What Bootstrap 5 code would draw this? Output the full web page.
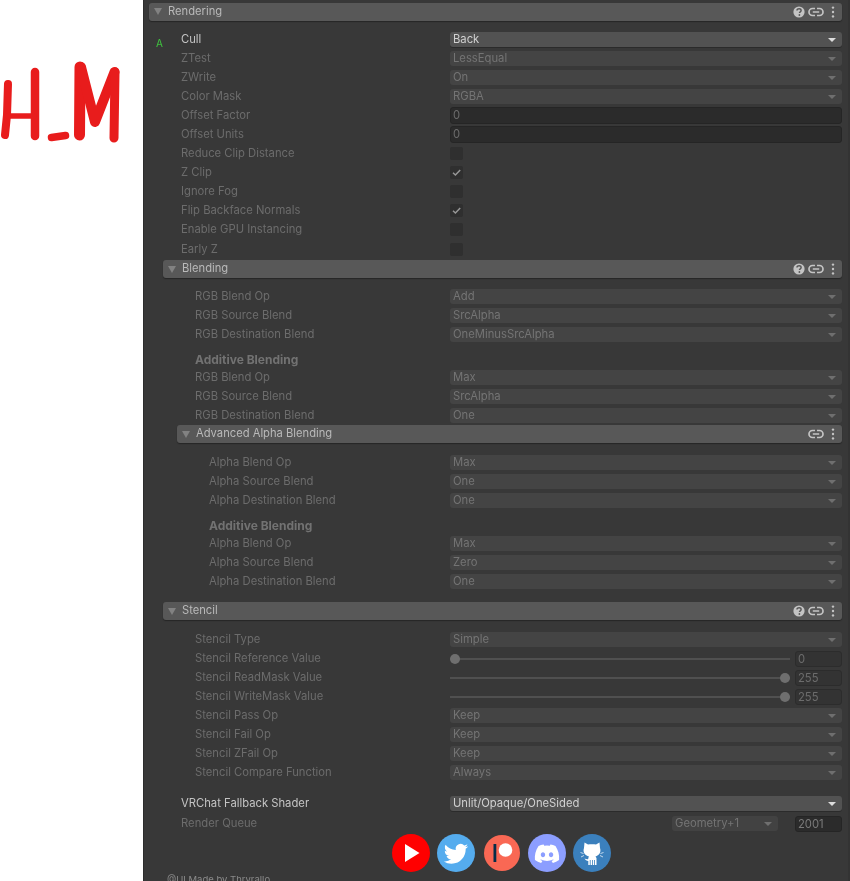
<!DOCTYPE html>
<html lang="en">
<head>
<meta charset="utf-8">
<title>Rendering</title>
<link href="https://cdn.jsdelivr.net/npm/bootstrap@5.3.0/dist/css/bootstrap.min.css" rel="stylesheet">
<style>
html,body{height:881px;overflow:hidden;background:#fff}
body{font-family:Inter,"Liberation Sans",sans-serif;font-size:11.25px;line-height:1;filter:blur(.4px)}
.stage{height:881px}
.logo-col{width:143px;flex:none}
.logo-svg{display:block;margin-top:50px}
.panel{flex:1;background:#383838;padding:2.5px 8px 0 5px;border-left:1px solid #2c2c2c;overflow:hidden;position:relative}
.sbar{position:absolute;top:0;right:0;bottom:0;width:2px;background:#333}
.fold{height:18px;background:#585858;border-radius:3px;box-shadow:0 1px 1px #262626;color:#b9b9b9;padding-left:5px;font-size:11.2px}
.fold .tri{width:0;height:0;border-left:4px solid transparent;border-right:4px solid transparent;border-top:7px solid #828282;margin-right:6px}
.fold .fname{flex:1}
.fold svg{display:block;flex:none}
.ic-set{gap:3px;padding-right:7px}
.body1{padding:9.5px 0 1px 0}
.nest{padding-left:14px}
.body2{padding-top:9px}
.body3{padding-top:10px}
.prow{height:19px;padding-left:32px;color:#6c6c6c}
.on{color:#c4c4c4}
.plabel{flex:1;white-space:nowrap}
.pctl{width:392px;flex:none}
.dd{height:15px;border-radius:3px;background:#444;color:#747474;padding:0 6px 0 3px}
.dd .val{flex:1}
.dd .car{width:0;height:0;border-left:4px solid transparent;border-right:4px solid transparent;border-top:4px solid #6f6f6f}
.dd.live{background:#525252;color:#d0d0d0;box-shadow:0 1px 0 #2b2b2b}
.dd.live .car{border-top-color:#dcdcdc}
.nbox{height:17px;background:#2b2b2b;border:1px solid #252525;border-radius:3px;color:#6c6c6c;padding-left:2px;line-height:15px}
.cbx{width:13px;height:13px;background:#2f2f2f;border-radius:2px;margin-left:0}
.cbx svg{display:block}
.mt-early{margin-top:1px}
.subhead{height:17px;margin-top:7px;font-weight:700;color:#727272;font-size:12px}
.gap11{margin-top:11px}
.gap12{margin-top:12px}
.track{flex:1;height:2px;background:#505050;position:relative}
.thumb{position:absolute;top:-4px;width:10px;height:10px;border-radius:50%;background:#6f6f6f}
.thumb.lo{left:0}
.thumb.hi{right:0}
.sl-num{width:47px;flex:none;height:16px;margin-left:5px;background:#333;border:1px solid #2c2c2c;border-radius:3px;color:#6c6c6c;padding-left:2px;line-height:14px}
.geo{width:106px;background:#424242;color:#747474;margin-right:17px}
.socials{margin-top:1px;margin-left:12px;align-items:center}
.soc{width:38px;height:38px;border-radius:50%;flex:none;margin-right:7.3px}
.soc.slim{width:36px;height:36px;margin-left:1px;margin-right:8.3px}
.soc:last-child{margin-right:0}
.soc svg{display:block}
.by{position:absolute;left:23px;top:875px;color:#8a8a8a;font-size:9.5px;white-space:nowrap}
.q-slot{width:47px;height:16px;flex:none;color:#7a7a7a;line-height:14px}
</style>
</head>
<body>
<svg width="0" height="0" class="position-absolute">
<symbol id="i-help" viewBox="0 0 12 12"><circle cx="6" cy="6" r="5.6" fill="#c4c4c4"/><path d="M4 4.6C4 3.3 5 2.7 6.1 2.7c1.2 0 2 .7 2 1.700 0 1.500-1.600 1.400-1.600 2.700" fill="none" stroke="#585858" stroke-width="1.500"/><circle cx="6.400" cy="9" r=".9" fill="#585858"/></symbol>
<symbol id="i-link" viewBox="0 0 16 12"><path d="M7 2.500H4.500a3.500 3.500 0 0 0 0 7H7M9 2.500h2.500a3.500 3.500 0 0 1 0 7H9M4.800 6h6.400" fill="none" stroke="#c4c4c4" stroke-width="1.700"/></symbol>
<symbol id="i-dots" viewBox="0 0 4 12"><circle cx="2" cy="1.600" r="1.200" fill="#c4c4c4"/><circle cx="2" cy="6" r="1.200" fill="#c4c4c4"/><circle cx="2" cy="10.400" r="1.200" fill="#c4c4c4"/></symbol>
<symbol id="i-chk" viewBox="0 0 13 13"><path d="M3 6.800l2.400 2.200 4.800-5" fill="none" stroke="#989898" stroke-width="1.500"/></symbol>
</svg>
<div class="stage d-flex">
  <div class="logo-col">
    <svg class="logo-svg" width="143" height="100" viewBox="0 50 143 100" fill="none" stroke="#e81c1c" stroke-linecap="round" stroke-linejoin="round">
      <path d="M8 84 7 115 5 135" stroke-width="8"/>
      <path d="M35 72V136" stroke-width="8.500"/>
      <path d="M8 116H34" stroke-width="5.500"/>
      <path d="M51.500 137.500 65.500 135.500" stroke-width="7.500"/>
      <path d="M79.500 135 80 67" stroke-width="11"/>
      <path d="M81 67 95 122 114.500 72" stroke-width="10"/>
      <path d="M115 72 114 138" stroke-width="9"/>
    </svg>
  </div>
  <div class="panel">
    <div class="sbar"></div>
    <div class="fold d-flex align-items-center"><span class="tri"></span><span class="fname">Rendering</span><span class="ic-set d-flex align-items-center"><svg width="12" height="12"><use href="#i-help"/></svg><svg width="16" height="12"><use href="#i-link"/></svg><svg width="4" height="12" class="ms-1"><use href="#i-dots"/></svg></span></div>
    <div class="body1">
      <div class="prow on d-flex align-items-center position-relative"><span class="position-absolute" style="left:7px;top:8px;color:#3fc43f;font-size:10px">A</span><span class="plabel">Cull</span><div class="pctl dd live d-flex align-items-center"><span class="val">Back</span><span class="car"></span></div></div>
      <div class="prow d-flex align-items-center"><span class="plabel">ZTest</span><div class="pctl dd d-flex align-items-center"><span class="val">LessEqual</span><span class="car"></span></div></div>
      <div class="prow d-flex align-items-center"><span class="plabel">ZWrite</span><div class="pctl dd d-flex align-items-center"><span class="val">On</span><span class="car"></span></div></div>
      <div class="prow d-flex align-items-center"><span class="plabel">Color Mask</span><div class="pctl dd d-flex align-items-center"><span class="val">RGBA</span><span class="car"></span></div></div>
      <div class="prow d-flex align-items-center"><span class="plabel">Offset Factor</span><div class="pctl nbox">0</div></div>
      <div class="prow d-flex align-items-center"><span class="plabel">Offset Units</span><div class="pctl nbox">0</div></div>
      <div class="prow d-flex align-items-center"><span class="plabel">Reduce Clip Distance</span><div class="pctl"><div class="cbx"></div></div></div>
      <div class="prow d-flex align-items-center"><span class="plabel">Z Clip</span><div class="pctl"><div class="cbx"><svg width="13" height="13"><use href="#i-chk"/></svg></div></div></div>
      <div class="prow d-flex align-items-center"><span class="plabel">Ignore Fog</span><div class="pctl"><div class="cbx"></div></div></div>
      <div class="prow d-flex align-items-center"><span class="plabel">Flip Backface Normals</span><div class="pctl"><div class="cbx"><svg width="13" height="13"><use href="#i-chk"/></svg></div></div></div>
      <div class="prow d-flex align-items-center"><span class="plabel">Enable GPU Instancing</span><div class="pctl"><div class="cbx"></div></div></div>
      <div class="prow mt-early d-flex align-items-center"><span class="plabel">Early Z</span><div class="pctl"><div class="cbx"></div></div></div>
    </div>
    <div class="nest">
      <div class="fold d-flex align-items-center"><span class="tri"></span><span class="fname">Blending</span><span class="ic-set d-flex align-items-center"><svg width="12" height="12"><use href="#i-help"/></svg><svg width="16" height="12"><use href="#i-link"/></svg><svg width="4" height="12" class="ms-1"><use href="#i-dots"/></svg></span></div>
      <div class="body2">
        <div class="prow d-flex align-items-center"><span class="plabel">RGB Blend Op</span><div class="pctl dd d-flex align-items-center"><span class="val">Add</span><span class="car"></span></div></div>
        <div class="prow d-flex align-items-center"><span class="plabel">RGB Source Blend</span><div class="pctl dd d-flex align-items-center"><span class="val">SrcAlpha</span><span class="car"></span></div></div>
        <div class="prow d-flex align-items-center"><span class="plabel">RGB Destination Blend</span><div class="pctl dd d-flex align-items-center"><span class="val">OneMinusSrcAlpha</span><span class="car"></span></div></div>
        <div class="prow subhead d-flex align-items-center"><span class="plabel">Additive Blending</span></div>
        <div class="prow d-flex align-items-center"><span class="plabel">RGB Blend Op</span><div class="pctl dd d-flex align-items-center"><span class="val">Max</span><span class="car"></span></div></div>
        <div class="prow d-flex align-items-center"><span class="plabel">RGB Source Blend</span><div class="pctl dd d-flex align-items-center"><span class="val">SrcAlpha</span><span class="car"></span></div></div>
        <div class="prow d-flex align-items-center"><span class="plabel">RGB Destination Blend</span><div class="pctl dd d-flex align-items-center"><span class="val">One</span><span class="car"></span></div></div>
      </div>
      <div class="nest">
        <div class="fold d-flex align-items-center"><span class="tri"></span><span class="fname">Advanced Alpha Blending</span><span class="ic-set d-flex align-items-center"><svg width="16" height="12"><use href="#i-link"/></svg><svg width="4" height="12" class="ms-1"><use href="#i-dots"/></svg></span></div>
        <div class="body3">
          <div class="prow d-flex align-items-center"><span class="plabel">Alpha Blend Op</span><div class="pctl dd d-flex align-items-center"><span class="val">Max</span><span class="car"></span></div></div>
          <div class="prow d-flex align-items-center"><span class="plabel">Alpha Source Blend</span><div class="pctl dd d-flex align-items-center"><span class="val">One</span><span class="car"></span></div></div>
          <div class="prow d-flex align-items-center"><span class="plabel">Alpha Destination Blend</span><div class="pctl dd d-flex align-items-center"><span class="val">One</span><span class="car"></span></div></div>
          <div class="prow subhead d-flex align-items-center"><span class="plabel">Additive Blending</span></div>
          <div class="prow d-flex align-items-center"><span class="plabel">Alpha Blend Op</span><div class="pctl dd d-flex align-items-center"><span class="val">Max</span><span class="car"></span></div></div>
          <div class="prow d-flex align-items-center"><span class="plabel">Alpha Source Blend</span><div class="pctl dd d-flex align-items-center"><span class="val">Zero</span><span class="car"></span></div></div>
          <div class="prow d-flex align-items-center"><span class="plabel">Alpha Destination Blend</span><div class="pctl dd d-flex align-items-center"><span class="val">One</span><span class="car"></span></div></div>
        </div>
      </div>
    </div>
    <div class="nest gap11">
      <div class="fold d-flex align-items-center"><span class="tri"></span><span class="fname">Stencil</span><span class="ic-set d-flex align-items-center"><svg width="12" height="12"><use href="#i-help"/></svg><svg width="16" height="12"><use href="#i-link"/></svg><svg width="4" height="12" class="ms-1"><use href="#i-dots"/></svg></span></div>
      <div class="body3">
        <div class="prow d-flex align-items-center"><span class="plabel">Stencil Type</span><div class="pctl dd d-flex align-items-center"><span class="val">Simple</span><span class="car"></span></div></div>
        <div class="prow d-flex align-items-center"><span class="plabel">Stencil Reference Value</span><div class="pctl d-flex align-items-center"><div class="track"><span class="thumb lo"></span></div><div class="sl-num">0</div></div></div>
        <div class="prow d-flex align-items-center"><span class="plabel">Stencil ReadMask Value</span><div class="pctl d-flex align-items-center"><div class="track"><span class="thumb hi"></span></div><div class="sl-num">255</div></div></div>
        <div class="prow d-flex align-items-center"><span class="plabel">Stencil WriteMask Value</span><div class="pctl d-flex align-items-center"><div class="track"><span class="thumb hi"></span></div><div class="sl-num">255</div></div></div>
        <div class="prow d-flex align-items-center"><span class="plabel">Stencil Pass Op</span><div class="pctl dd d-flex align-items-center"><span class="val">Keep</span><span class="car"></span></div></div>
        <div class="prow d-flex align-items-center"><span class="plabel">Stencil Fail Op</span><div class="pctl dd d-flex align-items-center"><span class="val">Keep</span><span class="car"></span></div></div>
        <div class="prow d-flex align-items-center"><span class="plabel">Stencil ZFail Op</span><div class="pctl dd d-flex align-items-center"><span class="val">Keep</span><span class="car"></span></div></div>
        <div class="prow d-flex align-items-center"><span class="plabel">Stencil Compare Function</span><div class="pctl dd d-flex align-items-center"><span class="val">Always</span><span class="car"></span></div></div>
      </div>
    </div>
    <div class="prow on gap12 d-flex align-items-center"><span class="plabel">VRChat Fallback Shader</span><div class="pctl dd live d-flex align-items-center"><span class="val">Unlit/Opaque/OneSided</span><span class="car"></span></div></div>
    <div class="prow mt-early d-flex align-items-center"><span class="plabel">Render Queue</span><div class="dd geo d-flex align-items-center"><span class="val">Geometry+1</span><span class="car"></span></div><div class="q-slot nbox">2001</div></div>
    <div class="socials d-flex justify-content-center">
      <div class="soc" style="background:#f00"><svg width="38" height="38" viewBox="0 0 38 38"><path d="M13 10 27.500 19 13 28Z" fill="#fff"/></svg></div>
      <div class="soc" style="background:#55acee"><svg width="38" height="38" viewBox="-4.500 -4.500 25 25"><path fill="#fff" d="M5.026 15c6.038 0 9.341-5.003 9.341-9.334 0-.14 0-.282-.006-.422A6.685 6.685 0 0 0 16 3.542a6.658 6.658 0 0 1-1.889.518 3.301 3.301 0 0 0 1.447-1.817 6.533 6.533 0 0 1-2.087.793A3.286 3.286 0 0 0 7.875 6.030a9.325 9.325 0 0 1-6.767-3.429 3.289 3.289 0 0 0 1.018 4.382A3.323 3.323 0 0 1 .64 6.575v.045a3.288 3.288 0 0 0 2.632 3.218 3.203 3.203 0 0 1-.865.115 3.230 3.230 0 0 1-.614-.057 3.283 3.283 0 0 0 3.067 2.277A6.588 6.588 0 0 1 .78 13.580a6.320 6.320 0 0 1-.78-.045A9.344 9.344 0 0 0 5.026 15z"/></svg></div>
      <div class="soc slim" style="background:#f96854"><svg width="36" height="36" viewBox="0 0 36 36"><rect x="9.500" y="9" width="2.800" height="18" fill="#052d49"/><circle cx="21.500" cy="15" r="6.800" fill="#fff"/></svg></div>
      <div class="soc" style="background:#8c9eff"><svg width="38" height="38" viewBox="-4.500 -5 25 25"><path fill="#fff" d="M13.545 2.907a13.227 13.227 0 0 0-3.257-1.011.05.05 0 0 0-.052.025c-.141.25-.297.577-.406.833a12.190 12.190 0 0 0-3.658 0 8.258 8.258 0 0 0-.412-.833.051.051 0 0 0-.052-.025c-1.125.194-2.220.534-3.257 1.011a.041.041 0 0 0-.021.018C.356 6.024-.213 9.047.066 12.032c.001.014.01.028.021.037a13.276 13.276 0 0 0 3.995 2.020.05.05 0 0 0 .056-.019c.308-.42.582-.863.818-1.329a.05.05 0 0 0-.01-.059.051.051 0 0 0-.018-.011 8.875 8.875 0 0 1-1.248-.595.05.05 0 0 1-.02-.066.051.051 0 0 1 .015-.019c.084-.063.168-.129.248-.195a.05.05 0 0 1 .051-.007c2.619 1.196 5.454 1.196 8.041 0a.052.052 0 0 1 .053.007c.08.066.164.132.248.195a.051.051 0 0 1-.004.085 8.254 8.254 0 0 1-1.249.594.05.05 0 0 0-.03.03.052.052 0 0 0 .003.041c.24.465.515.909.817 1.329a.05.05 0 0 0 .056.019 13.235 13.235 0 0 0 4.001-2.020.049.049 0 0 0 .021-.037c.334-3.451-.559-6.449-2.366-9.106a.034.034 0 0 0-.02-.019Zm-8.198 7.307c-.789 0-1.438-.724-1.438-1.612 0-.889.637-1.613 1.438-1.613.807 0 1.450.730 1.438 1.613 0 .888-.637 1.612-1.438 1.612Zm5.316 0c-.788 0-1.438-.724-1.438-1.612 0-.889.637-1.613 1.438-1.613.807 0 1.451.730 1.438 1.613 0 .888-.631 1.612-1.438 1.612Z"/></svg></div>
      <div class="soc" style="background:#3b80bd"><svg width="38" height="38" viewBox="0 0 38 38"><path fill="#fff" d="M11.500 8.500 15 10.500C17 10 21 10 23 10.500L26.500 8.500 27 14C28.500 18 26 21.500 22.500 22.500L23.500 24V31H22V26H21.200V31H19.800V26H19V31H17.600V26H16.800V31H15.300V27C13.500 27 12.500 26 11.500 24.500 13 25 14 25.500 15.300 25V24L16 22.500C12 21.500 9.500 18 11 14Z"/><path d="M7.500 18.500 10.500 19.500M30.500 18.500 27.500 19.500M8 23 11 21.500M30 23 27 21.500" stroke="#fff" stroke-width=".7"/></svg></div>
    </div>
    <div class="by">@UI Made by Thryrallo</div>
  </div>
</div>
<script src="https://cdn.jsdelivr.net/npm/bootstrap@5.3.0/dist/js/bootstrap.bundle.min.js"></script>
</body>
</html>
